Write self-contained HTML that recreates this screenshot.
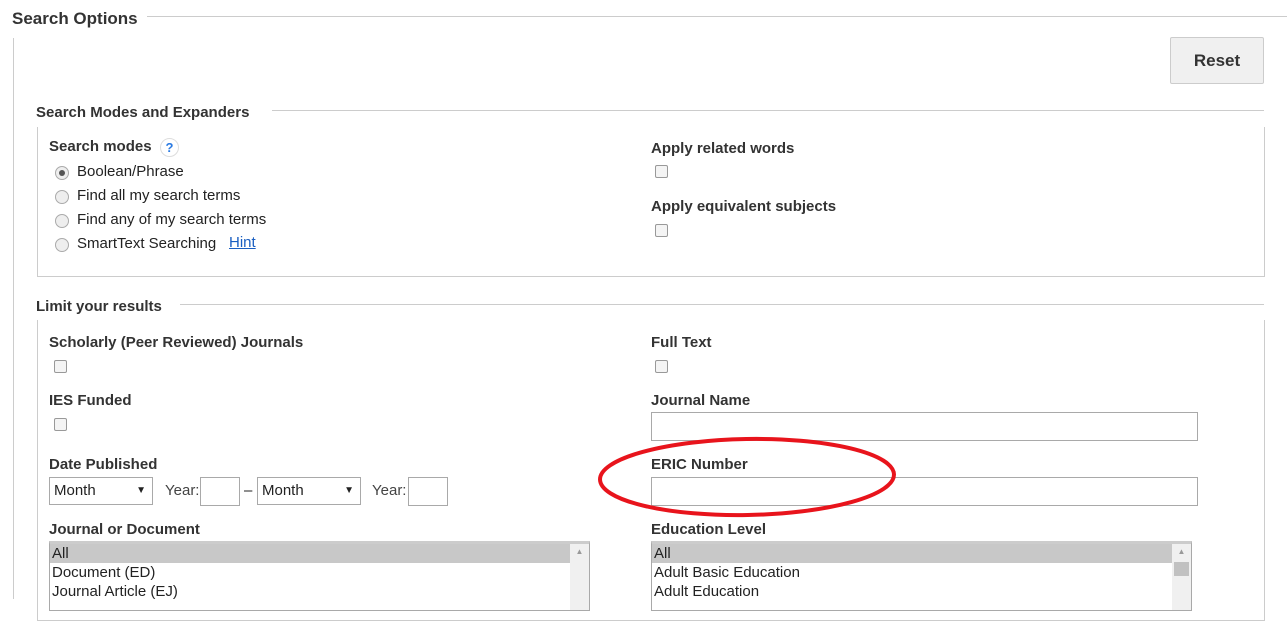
<!DOCTYPE html>
<html><head><style>
body{margin:0;width:1287px;height:599px;overflow:hidden;background:#fff;font-family:"Liberation Sans",Arial,sans-serif;color:#222;position:relative}
.a{position:absolute;white-space:nowrap}
.t{font-size:15px;line-height:18px}
.b{font-weight:bold;color:#333}
.ln{position:absolute;background:#ccc}
.cb{position:absolute;width:11px;height:11px;border:1px solid #999;border-radius:2px;background:#f4f4f4}
.rd{position:absolute;width:12px;height:12px;border:1px solid #aaa;border-radius:50%;background:#eee}
.in{position:absolute;border:1px solid #a9a9a9;background:#fff;box-sizing:border-box}
.sel{position:absolute;border:1px solid #a9a9a9;background:#fff;box-sizing:border-box;font-size:15px;line-height:25px;padding-left:4px}
.sel span{position:absolute;right:6px;font-size:10px}
.lst{position:absolute;border:1px solid #a9a9a9;border-top:3px solid #ccc;background:#fff;box-sizing:border-box;font-size:15px;line-height:19px;overflow:hidden}
</style></head><body>
<div class="a b" style="left:12px;top:9px;font-size:17px;line-height:20px">Search Options</div>
<div class="ln" style="left:147px;top:16px;width:1140px;height:1px"></div>
<div class="ln" style="left:13px;top:38px;width:1px;height:561px"></div>
<div class="a" style="left:1170px;top:37px;width:94px;height:47px;box-sizing:border-box;border:1px solid #ccc;background:#f0f0f0;border-radius:2px;font-size:17px;font-weight:bold;color:#333;text-align:center;line-height:45px">Reset</div>

<div class="a t b" style="left:36px;top:104px">Search Modes and Expanders</div>
<div class="ln" style="left:272px;top:110px;width:992px;height:1px"></div>
<div class="a" style="left:37px;top:127px;width:1226px;height:149px;border:1px solid #ccc;border-top:none"></div>
<div class="a t b" style="left:49px;top:138px">Search modes</div>
<div class="a" style="left:160px;top:138px;width:17px;height:17px;border:1px solid #ddd;border-radius:50%;color:#2a7ae2;font-size:13px;font-weight:bold;text-align:center;line-height:17px">?</div>
<div class="rd" style="left:55px;top:166px"></div><div class="a" style="left:59px;top:170px;width:6px;height:6px;border-radius:50%;background:#555"></div>
<div class="a t" style="left:77px;top:163px">Boolean/Phrase</div>
<div class="rd" style="left:55px;top:190px"></div><div class="a t" style="left:77px;top:187px">Find all my search terms</div>
<div class="rd" style="left:55px;top:214px"></div><div class="a t" style="left:77px;top:211px">Find any of my search terms</div>
<div class="rd" style="left:55px;top:238px"></div><div class="a t" style="left:77px;top:235px">SmartText Searching</div>
<div class="a t" style="left:229px;top:234px;color:#1a5fc2;text-decoration:underline">Hint</div>
<div class="a t b" style="left:651px;top:140px">Apply related words</div>
<div class="cb" style="left:655px;top:165px"></div>
<div class="a t b" style="left:651px;top:198px">Apply equivalent subjects</div>
<div class="cb" style="left:655px;top:224px"></div>

<div class="a t b" style="left:36px;top:298px">Limit your results</div>
<div class="ln" style="left:180px;top:304px;width:1084px;height:1px"></div>
<div class="a" style="left:37px;top:320px;width:1226px;height:300px;border:1px solid #ccc;border-top:none"></div>
<div class="a t b" style="left:49px;top:334px">Scholarly (Peer Reviewed) Journals</div>
<div class="cb" style="left:54px;top:360px"></div>
<div class="a t b" style="left:49px;top:392px">IES Funded</div>
<div class="cb" style="left:54px;top:418px"></div>
<div class="a t b" style="left:651px;top:334px">Full Text</div>
<div class="cb" style="left:655px;top:360px"></div>
<div class="a t b" style="left:651px;top:392px">Journal Name</div>
<div class="in" style="left:651px;top:412px;width:547px;height:29px"></div>
<div class="a t b" style="left:49px;top:456px">Date Published</div>
<div class="sel" style="left:49px;top:477px;width:104px;height:28px">Month<span>▼</span></div>
<div class="a t" style="left:165px;top:482px;color:#444">Year:</div>
<div class="in" style="left:200px;top:477px;width:40px;height:29px"></div>
<div class="a t" style="left:244px;top:482px">–</div>
<div class="sel" style="left:257px;top:477px;width:104px;height:28px">Month<span>▼</span></div>
<div class="a t" style="left:372px;top:482px;color:#444">Year:</div>
<div class="in" style="left:408px;top:477px;width:40px;height:29px"></div>
<div class="a t b" style="left:651px;top:456px">ERIC Number</div>
<div class="in" style="left:651px;top:477px;width:547px;height:29px"></div>
<div class="a t b" style="left:49px;top:521px">Journal or Document</div>
<div class="lst" style="left:49px;top:541px;width:541px;height:70px">
<div style="background:#c8c8c8;width:518px;padding-left:2px">All</div><div style="padding-left:2px">Document (ED)</div><div style="padding-left:2px">Journal Article (EJ)</div>
<div style="position:absolute;right:0;top:0;width:19px;height:70px;background:#f0f0f0;font-size:8px;color:#999;text-align:center;line-height:16px">▲</div></div>
<div class="a t b" style="left:651px;top:521px">Education Level</div>
<div class="lst" style="left:651px;top:541px;width:541px;height:70px">
<div style="background:#c8c8c8;width:518px;padding-left:2px">All</div><div style="padding-left:2px">Adult Basic Education</div><div style="padding-left:2px">Adult Education</div>
<div style="position:absolute;right:0;top:0;width:19px;height:70px;background:#f0f0f0;font-size:8px;color:#999;text-align:center;line-height:16px">▲<div style="margin:2px auto;width:15px;height:14px;background:#c1c1c1"></div></div></div>

<svg class="a" style="left:0;top:0" width="1287" height="599"><ellipse cx="747" cy="477" rx="147" ry="38" fill="none" stroke="#e8141c" stroke-width="4" transform="rotate(-1 747 477)"/></svg>
</body></html>
